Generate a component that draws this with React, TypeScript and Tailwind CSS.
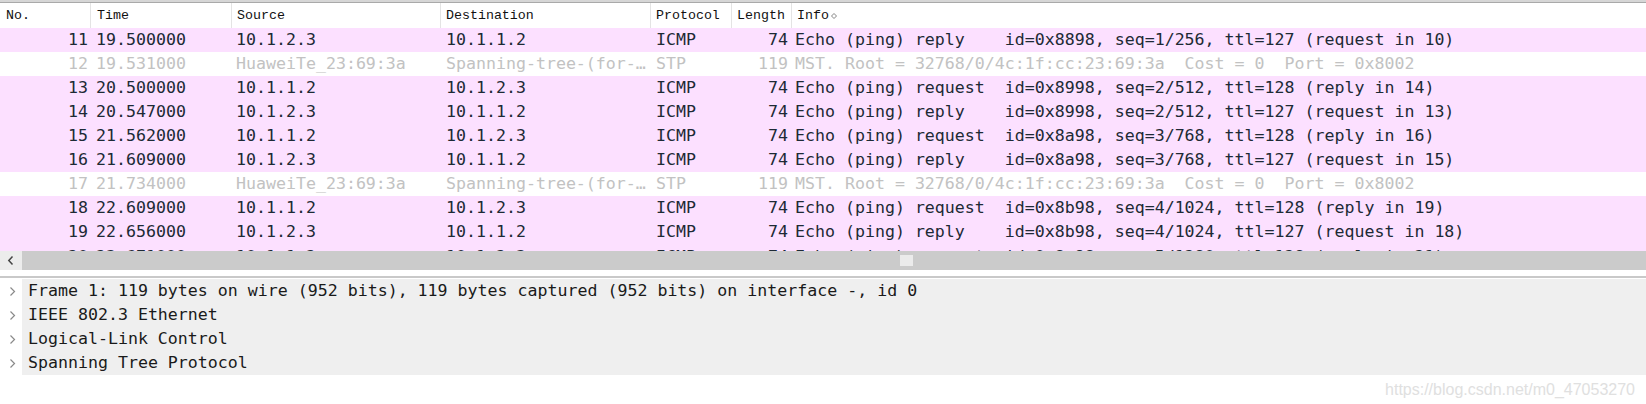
import React from "react";

type Row = {
  no: string;
  time: string;
  src: string;
  dst: string;
  proto: string;
  len: string;
  info: string;
  stp?: boolean;
  partial?: boolean;
};

const rows: Row[] = [
  { no: "11", time: "19.500000", src: "10.1.2.3", dst: "10.1.1.2", proto: "ICMP", len: "74", info: "Echo (ping) reply    id=0x8898, seq=1/256, ttl=127 (request in 10)" },
  { no: "12", time: "19.531000", src: "HuaweiTe_23:69:3a", dst: "Spanning-tree-(for-…", proto: "STP", len: "119", info: "MST. Root = 32768/0/4c:1f:cc:23:69:3a  Cost = 0  Port = 0x8002", stp: true },
  { no: "13", time: "20.500000", src: "10.1.1.2", dst: "10.1.2.3", proto: "ICMP", len: "74", info: "Echo (ping) request  id=0x8998, seq=2/512, ttl=128 (reply in 14)" },
  { no: "14", time: "20.547000", src: "10.1.2.3", dst: "10.1.1.2", proto: "ICMP", len: "74", info: "Echo (ping) reply    id=0x8998, seq=2/512, ttl=127 (request in 13)" },
  { no: "15", time: "21.562000", src: "10.1.1.2", dst: "10.1.2.3", proto: "ICMP", len: "74", info: "Echo (ping) request  id=0x8a98, seq=3/768, ttl=128 (reply in 16)" },
  { no: "16", time: "21.609000", src: "10.1.2.3", dst: "10.1.1.2", proto: "ICMP", len: "74", info: "Echo (ping) reply    id=0x8a98, seq=3/768, ttl=127 (request in 15)" },
  { no: "17", time: "21.734000", src: "HuaweiTe_23:69:3a", dst: "Spanning-tree-(for-…", proto: "STP", len: "119", info: "MST. Root = 32768/0/4c:1f:cc:23:69:3a  Cost = 0  Port = 0x8002", stp: true },
  { no: "18", time: "22.609000", src: "10.1.1.2", dst: "10.1.2.3", proto: "ICMP", len: "74", info: "Echo (ping) request  id=0x8b98, seq=4/1024, ttl=128 (reply in 19)" },
  { no: "19", time: "22.656000", src: "10.1.2.3", dst: "10.1.1.2", proto: "ICMP", len: "74", info: "Echo (ping) reply    id=0x8b98, seq=4/1024, ttl=127 (request in 18)" },
  { no: "20", time: "23.671000", src: "10.1.1.2", dst: "10.1.2.3", proto: "ICMP", len: "74", info: "Echo (ping) request  id=0x8c98, seq=5/1280, ttl=128 (reply in 21)", partial: true },
];

const details = [
  "Frame 1: 119 bytes on wire (952 bits), 119 bytes captured (952 bits) on interface -, id 0",
  "IEEE 802.3 Ethernet",
  "Logical-Link Control",
  "Spanning Tree Protocol",
];

const gridCols = "grid grid-cols-[91px_141px_209px_210px_81px_60px_1fr]";

function Chevron() {
  return (
    <svg width="7" height="11" viewBox="0 0 7 11" className="block">
      <path d="M1.5 1.5 L5.5 5.5 L1.5 9.5" fill="none" stroke="#8a8a8a" strokeWidth="1.2" />
    </svg>
  );
}

export default function App() {
  return (
    <div className="w-[1646px] h-[404px] bg-white overflow-hidden flex flex-col">
      {/* top border */}
      <div className="h-[3px] bg-[#d6d6d6] border-b border-[#a9a9a9]" />

      {/* header */}
      <div
        className={`${gridCols} h-[25px] items-stretch bg-white text-[#111] text-[13.3px]`}
        style={{ fontFamily: '"Liberation Mono", monospace' }}
      >
        <div className="pl-[6px] flex items-center border-r border-[#e4e4e4]">No.</div>
        <div className="pl-[6px] flex items-center border-r border-[#e4e4e4]">Time</div>
        <div className="pl-[5px] flex items-center border-r border-[#e4e4e4]">Source</div>
        <div className="pl-[5px] flex items-center border-r border-[#e4e4e4]">Destination</div>
        <div className="pl-[5px] flex items-center border-r border-[#e4e4e4]">Protocol</div>
        <div className="pl-[5px] flex items-center border-r border-[#e4e4e4]">Length</div>
        <div className="pl-[5px] flex items-center gap-[2px]">
          Info
          <svg width="6" height="6" viewBox="0 0 6 6">
            <path d="M3 0.5 L5.5 3 L3 5.5 L0.5 3 Z" fill="none" stroke="#777" strokeWidth="0.9" />
          </svg>
        </div>
      </div>

      {/* packet list */}
      <div
        className="h-[223px] overflow-hidden text-[16.6px]"
        style={{ fontFamily: '"DejaVu Sans Mono", monospace' }}
      >
        {rows.map((r) => (
          <div
            key={r.no}
            className={`${gridCols} h-[24px] whitespace-pre ${
              r.partial ? "items-start pt-[1px]" : "items-center"
            } ${r.stp ? "bg-white text-[#c2c2c2]" : "bg-[#fce0ff] text-[#1d2a35]"}`}
          >
            <div className="text-right pr-[3px]">{r.no}</div>
            <div className="pl-[5px]">{r.time}</div>
            <div className="pl-[4px]">{r.src}</div>
            <div className="pl-[5px] overflow-hidden">{r.dst}</div>
            <div className="pl-[5px]">{r.proto}</div>
            <div className="text-right pr-[4px]">{r.len}</div>
            <div className="pl-[3px]">{r.info}</div>
          </div>
        ))}
      </div>

      {/* horizontal scrollbar */}
      <div className="h-[19px] flex bg-[#cbcbcb]">
        <div className="w-[22px] bg-[#ececec] flex items-center justify-center">
          <svg width="8" height="11" viewBox="0 0 8 11">
            <path d="M5.5 1.5 L1.8 5.5 L5.5 9.5" fill="none" stroke="#444" strokeWidth="1.5" />
          </svg>
        </div>
        <div className="flex-1 flex items-center pl-[878px]">
          <div className="w-[13px] h-[11px] bg-[#ebebeb]" />
        </div>
      </div>

      {/* splitter */}
      <div className="h-[6px] bg-white" />
      <div className="h-[2px] bg-[#c9c9c9]" />
      <div className="h-[1px] bg-white" />

      {/* packet details */}
      <div
        className="flex flex-col text-[16.6px] text-[#1a1a1a]"
        style={{ fontFamily: '"DejaVu Sans Mono", monospace' }}
      >
        {details.map((d) => (
          <div key={d} className="h-[24px] flex items-stretch">
            <div className="w-[22px] bg-white flex items-center justify-center pl-[2px]">
              <Chevron />
            </div>
            <div className="flex-1 bg-[#efefef] flex items-center pl-[6px] whitespace-pre">{d}</div>
          </div>
        ))}
      </div>

      {/* watermark area */}
      <div className="flex-1 bg-white flex items-center justify-end pr-[11px]">
        <span
          className="text-[16px] text-[#e0e0e0]"
          style={{ fontFamily: '"Liberation Sans", Arial, sans-serif' }}
        >
          https://blog.csdn.net/m0_47053270
        </span>
      </div>
    </div>
  );
}
